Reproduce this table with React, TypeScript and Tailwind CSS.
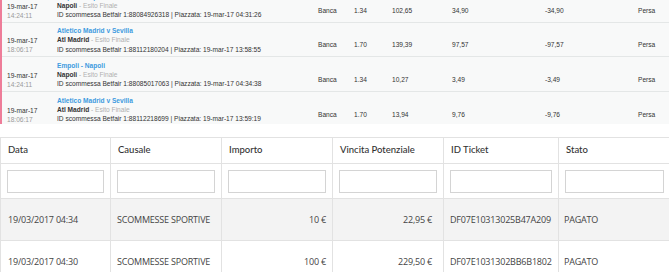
import React from "react";

type Bet = {
  date: string;
  time: string;
  match: string;
  team: string;
  betId: string;
  placed: string;
  odds: string;
  liability: string;
  stake: string;
  result: string;
};

const bets: Bet[] = [
  {
    date: "19-mar-17",
    time: "14:24:11",
    match: "Empoli - Napoli",
    team: "Napoli",
    betId: "1:88084926318",
    placed: "19-mar-17 04:31:26",
    odds: "1.34",
    liability: "102,65",
    stake: "34,90",
    result: "-34,90",
  },
  {
    date: "19-mar-17",
    time: "18:06:17",
    match: "Atletico Madrid v Sevilla",
    team: "Atl Madrid",
    betId: "1:88112180204",
    placed: "19-mar-17 13:58:55",
    odds: "1.70",
    liability: "139,39",
    stake: "97,57",
    result: "-97,57",
  },
  {
    date: "19-mar-17",
    time: "14:24:11",
    match: "Empoli - Napoli",
    team: "Napoli",
    betId: "1:88085017063",
    placed: "19-mar-17 04:34:38",
    odds: "1.34",
    liability: "10,27",
    stake: "3,49",
    result: "-3,49",
  },
  {
    date: "19-mar-17",
    time: "18:06:17",
    match: "Atletico Madrid v Sevilla",
    team: "Atl Madrid",
    betId: "1:88112218699",
    placed: "19-mar-17 13:59:19",
    odds: "1.70",
    liability: "13,94",
    stake: "9,76",
    result: "-9,76",
  },
];

const movements = [
  {
    data: "19/03/2017 04:34",
    causale: "SCOMMESSE SPORTIVE",
    importo: "10 €",
    vincita: "22,95 €",
    ticket: "DF07E10313025B47A209",
    stato: "PAGATO",
  },
  {
    data: "19/03/2017 04:30",
    causale: "SCOMMESSE SPORTIVE",
    importo: "100 €",
    vincita: "229,50 €",
    ticket: "DF07E1031302BB6B1802",
    stato: "PAGATO",
  },
];

const headers = ["Data", "Causale", "Importo", "Vincita Potenziale", "ID Ticket", "Stato"];

function BetRow({ bet }: { bet: Bet }) {
  return (
    <div className="grid h-[34.7px] grid-cols-[50px_261px_36px_38px_60px_93px_93px_1fr] border-b border-[#e4e7e7] pl-[5px] text-[6.6px] leading-[9.3px] text-[#333]">
      {/* date / time */}
      <div className="pt-[13.5px]">
        <div>{bet.date}</div>
        <div className="text-[#9a9a9a]">{bet.time}</div>
      </div>

      {/* event details */}
      <div className="pt-[3.5px]">
        <div className="font-bold text-[#3d9be0]">{bet.match}</div>
        <div>
          <span className="font-bold">{bet.team}</span>
          <span className="text-[#b0b0b0]"> - Esito Finale</span>
        </div>
        <div>
          ID scommessa Betfair {bet.betId} | Piazzata: {bet.placed}
        </div>
      </div>

      <div className="pt-[17.5px]">Banca</div>
      <div className="pt-[17.5px]">{bet.odds}</div>
      <div className="pt-[17.5px]">{bet.liability}</div>
      <div className="pt-[17.5px]">{bet.stake}</div>
      <div className="pt-[17.5px]">{bet.result}</div>
      <div className="pt-[17.5px]">Persa</div>
    </div>
  );
}

export default function App() {
  return (
    <div className="h-[272px] w-[669px] overflow-hidden bg-white">
      {/* Betfair bets list */}
      <div
        className="mt-[-12px] h-[136px] overflow-hidden border-l-2 border-[#ee7d99] bg-[#f8f9f9]"
        style={{ fontFamily: "'Liberation Sans', Arial, sans-serif" }}
      >
        {bets.map((b, i) => (
          <BetRow key={i} bet={b} />
        ))}
      </div>

      {/* Movements table */}
      <table className="mt-[13px] w-[670px] table-fixed border-collapse">
        <colgroup>
          <col className="w-[110px]" />
          <col className="w-[111px]" />
          <col className="w-[111px]" />
          <col className="w-[111px]" />
          <col className="w-[115px]" />
          <col className="w-[112px]" />
        </colgroup>
        <thead>
          <tr className="h-[26px]">
            {headers.map((h) => (
              <th
                key={h}
                className="border border-[#e2e2e2] px-[7px] text-left text-[9.5px] font-medium text-[#333]"
                style={{ fontFamily: "Lato, 'Noto Sans', sans-serif" }}
              >
                {h}
              </th>
            ))}
          </tr>
          <tr className="h-[35px]">
            {headers.map((h) => (
              <th key={h} className="border border-[#e2e2e2] px-[6px] font-normal">
                <input
                  type="text"
                  className="block h-[23px] w-full border border-[#d4d4d4] bg-white"
                />
              </th>
            ))}
          </tr>
        </thead>
        <tbody
          className="text-[9px] tracking-[-0.2px] text-[#444]"
          style={{ fontFamily: "'Open Sans', 'Noto Sans', sans-serif" }}
        >
          {movements.map((m, i) => (
            <tr key={i} className={i === 0 ? "h-[42px] bg-[#f3f3f3]" : "h-[42px] bg-white"}>
              <td className="border border-[#e2e2e2] px-[7px]">{m.data}</td>
              <td className="border border-[#e2e2e2] px-[6px]">{m.causale}</td>
              <td className="border border-[#e2e2e2] px-[6px] text-right">{m.importo}</td>
              <td className="border border-[#e2e2e2] pr-[11px] text-right">{m.vincita}</td>
              <td className="border border-[#e2e2e2] px-[6px]">{m.ticket}</td>
              <td className="border border-[#e2e2e2] px-[5px]">{m.stato}</td>
            </tr>
          ))}
        </tbody>
      </table>
    </div>
  );
}
